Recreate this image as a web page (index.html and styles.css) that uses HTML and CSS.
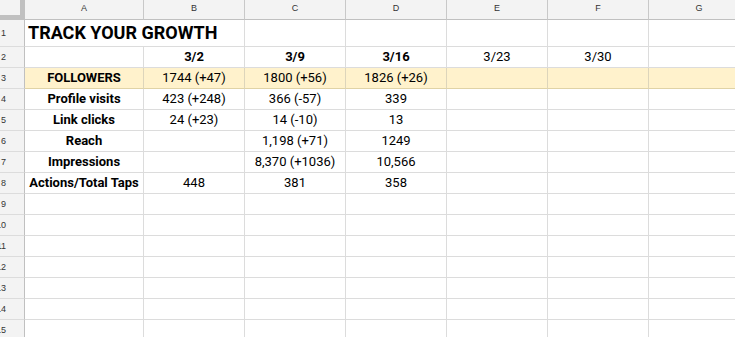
FILE: index.html
```html
<!DOCTYPE html>
<html>
<head>
<meta charset="utf-8">
<link rel="stylesheet" href="styles.css">
</head>
<body>
<div class="sheet">
  <div class="corner"><div class="corner-in"></div></div>
  <div class="colhead">A</div>
  <div class="colhead">B</div>
  <div class="colhead">C</div>
  <div class="colhead">D</div>
  <div class="colhead">E</div>
  <div class="colhead">F</div>
  <div class="colhead">G</div>

  <div class="rowhead"><span>1</span></div>
  <div class="cell title">TRACK YOUR GROWTH</div>
  <div class="cell"></div><div class="cell"></div><div class="cell"></div><div class="cell"></div><div class="cell"></div>

  <div class="rowhead"><span>2</span></div>
  <div class="cell"></div>
  <div class="cell b">3/2</div>
  <div class="cell b">3/9</div>
  <div class="cell b">3/16</div>
  <div class="cell">3/23</div>
  <div class="cell">3/30</div>
  <div class="cell"></div>

  <div class="rowhead"><span>3</span></div>
  <div class="cell hl b">FOLLOWERS</div>
  <div class="cell hl">1744 (+47)</div>
  <div class="cell hl">1800 (+56)</div>
  <div class="cell hl">1826 (+26)</div>
  <div class="cell hl"></div>
  <div class="cell hl"></div>
  <div class="cell hl"></div>

  <div class="rowhead"><span>4</span></div>
  <div class="cell b">Profile visits</div>
  <div class="cell">423 (+248)</div>
  <div class="cell">366 (-57)</div>
  <div class="cell">339</div>
  <div class="cell"></div><div class="cell"></div><div class="cell"></div>

  <div class="rowhead"><span>5</span></div>
  <div class="cell b">Link clicks</div>
  <div class="cell">24 (+23)</div>
  <div class="cell">14 (-10)</div>
  <div class="cell">13</div>
  <div class="cell"></div><div class="cell"></div><div class="cell"></div>

  <div class="rowhead"><span>6</span></div>
  <div class="cell b">Reach</div>
  <div class="cell"></div>
  <div class="cell">1,198 (+71)</div>
  <div class="cell">1249</div>
  <div class="cell"></div><div class="cell"></div><div class="cell"></div>

  <div class="rowhead"><span>7</span></div>
  <div class="cell b">Impressions</div>
  <div class="cell"></div>
  <div class="cell">8,370 (+1036)</div>
  <div class="cell">10,566</div>
  <div class="cell"></div><div class="cell"></div><div class="cell"></div>

  <div class="rowhead"><span>8</span></div>
  <div class="cell b">Actions/Total Taps</div>
  <div class="cell">448</div>
  <div class="cell">381</div>
  <div class="cell">358</div>
  <div class="cell"></div><div class="cell"></div><div class="cell"></div>

  <div class="rowhead"><span>9</span></div>
  <div class="cell"></div><div class="cell"></div><div class="cell"></div><div class="cell"></div><div class="cell"></div><div class="cell"></div><div class="cell"></div>

  <div class="rowhead"><span>10</span></div>
  <div class="cell"></div><div class="cell"></div><div class="cell"></div><div class="cell"></div><div class="cell"></div><div class="cell"></div><div class="cell"></div>

  <div class="rowhead"><span>11</span></div>
  <div class="cell"></div><div class="cell"></div><div class="cell"></div><div class="cell"></div><div class="cell"></div><div class="cell"></div><div class="cell"></div>

  <div class="rowhead"><span>12</span></div>
  <div class="cell"></div><div class="cell"></div><div class="cell"></div><div class="cell"></div><div class="cell"></div><div class="cell"></div><div class="cell"></div>

  <div class="rowhead"><span>13</span></div>
  <div class="cell"></div><div class="cell"></div><div class="cell"></div><div class="cell"></div><div class="cell"></div><div class="cell"></div><div class="cell"></div>

  <div class="rowhead"><span>14</span></div>
  <div class="cell"></div><div class="cell"></div><div class="cell"></div><div class="cell"></div><div class="cell"></div><div class="cell"></div><div class="cell"></div>

  <div class="rowhead"><span>15</span></div>
  <div class="cell"></div><div class="cell"></div><div class="cell"></div><div class="cell"></div><div class="cell"></div><div class="cell"></div><div class="cell"></div>
</div>
</body>
</html>
```
FILE: styles.css
```css
html, body {
  margin: 0;
  padding: 0;
  background: #ffffff;
  overflow: hidden;
}

.sheet {
  display: grid;
  grid-template-columns: 25px 119px repeat(6, 101px);
  grid-template-rows: 20px 27px;
  grid-auto-rows: 21px;
  width: 750px;
  font-family: Roboto, "Liberation Sans", Arial, sans-serif;
  color: #000;
}

.corner {
  background: #f3f3f3;
  border-right: 1px solid #c0c0c0;
  border-bottom: 1px solid #c0c0c0;
  box-sizing: border-box;
}

.corner-in {
  width: 20px;
  height: 15px;
  border-right: 4px solid #c0c0c0;
  border-bottom: 4px solid #c0c0c0;
  background: #f3f3f3;
}

.colhead {
  background: #f3f3f3;
  border-right: 1px solid #c8c8c8;
  border-bottom: 1px solid #c0c0c0;
  box-sizing: border-box;
  font-family: "Liberation Sans", Arial, sans-serif;
  font-size: 9px;
  line-height: 16px;
  padding-bottom: 3px;
  text-align: center;
  color: #333;
}

.rowhead {
  background: #f3f3f3;
  border-right: 1px solid #c0c0c0;
  border-bottom: 1px solid #dcdcdc;
  box-sizing: border-box;
  display: flex;
  align-items: center;
  justify-content: flex-end;
  padding-right: 18px;
  overflow: hidden;
  font-family: "Liberation Sans", Arial, sans-serif;
  font-size: 9px;
  color: #333;
}

.rowhead span {
  flex: none;
  white-space: nowrap;
}

.cell {
  border-right: 1px solid #dcdcdc;
  border-bottom: 1px solid #dcdcdc;
  box-sizing: border-box;
  font-size: 13px;
  line-height: 20px;
  text-align: center;
  white-space: nowrap;
  overflow: hidden;
}

.cell.b {
  font-weight: bold;
}

.cell.title {
  grid-column: span 2;
  text-align: left;
  padding-left: 3px;
  font-size: 18px;
  font-weight: bold;
  line-height: 26px;
}

.cell.hl {
  background: #fff2cc;
  border-right-color: #ddd5bb;
  border-bottom-color: #e0d3a6;
}
```
